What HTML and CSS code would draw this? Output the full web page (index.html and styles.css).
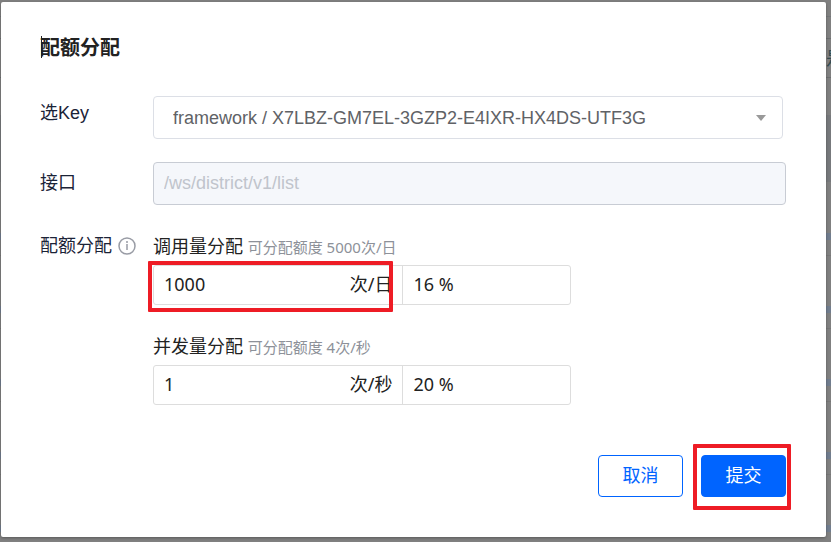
FILE: index.html
```
<!DOCTYPE html>
<html lang="zh-CN">

<head>
    <title>配额分配</title>
    <meta charset="utf-8" />
    <link rel="stylesheet" href="styles.css">
</head>

<body>
    <div class="backdrop">
        <span class="backdrop-text">是</span>
    </div>
    <form class="modal">
        <h1 class="title">配额分配</h1>
        <div class="row">
            <label class="label" for="key">选Key</label>
            <div class="field select-box">
                <select class="select" id="key">
                    <option>framework / X7LBZ-GM7EL-3GZP2-E4IXR-HX4DS-UTF3G</option>
                </select>
                <svg class="arrow" viewBox="0 0 10 6"><path d="M0 0h10L5 6z" /></svg>
            </div>
        </div>
        <div class="row row-api">
            <label class="label" for="api">接口</label>
            <div class="field">
                <input class="input" id="api" type="text" value="/ws/district/v1/list" disabled>
            </div>
        </div>
        <div class="row row-quota">
            <div class="label">配额分配
                <svg class="info" viewBox="0 0 18 18">
                    <circle cx="9" cy="9" r="8" />
                    <path d="M9 4v2M9 7v6" />
                </svg>
            </div>
            <div class="field">
                <div class="quota">
                    <label class="quota-title" for="daily">调用量分配 <small class="tip">可分配额度 5000次/日</small></label>
                    <div class="group">
                        <div class="amount">
                            <input class="number" id="daily" type="text" value="1000">
                            <span>次/日</span>
                        </div>
                        <output class="percent" for="daily">16 %</output>
                        <i class="mark mark-amount"></i>
                    </div>
                </div>
                <div class="quota">
                    <label class="quota-title" for="second">并发量分配 <small class="tip">可分配额度 4次/秒</small></label>
                    <div class="group">
                        <div class="amount">
                            <input class="number" id="second" type="text" value="1">
                            <span>次/秒</span>
                        </div>
                        <output class="percent" for="second">20 %</output>
                    </div>
                </div>
            </div>
        </div>
        <div class="footer">
            <button class="btn" type="button">取消</button>
            <div class="submit">
                <button class="btn btn-primary" type="submit">提交</button>
                <i class="mark mark-submit"></i>
            </div>
        </div>
    </form>
</body>

</html>
```

FILE: styles.css
```
* {
    box-sizing: border-box;
}

body {
    margin: 0;
    padding: 2px 5px 5px 1px;
    background: #808080;
    color: #222;
    font: 18px/24px "Noto Sans", "Noto Sans CJK SC", sans-serif;
}

/* 弹窗后面的页面 */
.backdrop {
    position: absolute;
    top: 0;
    right: 0;
    bottom: 0;
    left: 0;
    overflow: hidden;
    background:
        linear-gradient(#737678, #737678) 0 16px / 100% 1px no-repeat,
        linear-gradient(#6d6f70, #6d6f70) 0 38px / 100% 1px no-repeat,
        linear-gradient(#6d6f70, #6d6f70) 0 77px / 100% 1px no-repeat,
        linear-gradient(#77797c, #77797c) 0 115px / 100% 67px no-repeat,
        repeating-linear-gradient(#717d8e 0 7px, transparent 7px 22px, #777 22px 23px, transparent 23px 73px) 0 233px / 100% 309px no-repeat,
        #808080;
}

.backdrop-text {
    position: absolute;
    top: 46px;
    right: -13px;
    color: #344b50;
}

/* 弹窗 */
.modal {
    position: relative;
    padding: 33px 40px 40px 39px;
    border-radius: 2px;
    background: #fff;
    box-shadow: 0 1px 3px rgba(0, 0, 0, .3);
}

.title {
    position: relative;
    margin: 0 0 35px;
    font-size: 20px;
    line-height: 26px;
}

.title::before {
    content: "";
    position: absolute;
    top: 1px;
    left: 1px;
    width: 1px;
    height: 22px;
    background: #222;
}

.row {
    display: flex;
    margin-bottom: 23px;
}

.label {
    flex: none;
    width: 113px;
    padding-top: 5px;
    color: #1b2337;
    font-family: "Liberation Sans", "Noto Sans CJK SC", sans-serif;
}

.row-api .label {
    padding-top: 9px;
}

.field {
    flex: 1;
    min-width: 0;
}

.select-box {
    position: relative;
    margin-right: 3px;
}

.select,
.input {
    display: block;
    width: 100%;
    height: 43px;
    padding: 0 10px;
    border: 1px solid #dcdfe6;
    border-radius: 4px;
    background: #fff;
    font: 18px/24px "Liberation Sans", "Noto Sans CJK SC", sans-serif;
}

.select {
    appearance: none;
    padding: 0 19px;
    color: #606266;
}

.input:disabled {
    border-color: #c8ccd4;
    background: #f5f7fb;
    color: #c0c4cc;
}

.arrow {
    position: absolute;
    top: 19px;
    right: 17px;
    width: 10px;
    height: 6px;
    fill: #999;
}

.row-quota {
    margin-bottom: 50px;
}

.row-quota .label {
    display: flex;
    align-items: center;
    gap: 6px;
    height: 24px;
    margin-top: 6px;
    padding-top: 0;
}

.info {
    width: 18px;
    height: 18px;
    fill: none;
    stroke: #999ca5;
    stroke-width: 1.5;
}

.quota {
    padding-top: 6px;
}

.quota + .quota {
    margin-top: 23px;
}

.quota-title {
    display: block;
    height: 24px;
    margin-bottom: 7px;
}

.tip {
    color: #8d9199;
    font-size: 15px;
}

.group {
    position: relative;
    display: flex;
    width: 66%;
    height: 40px;
    border: 1px solid #ddd;
    border-radius: 3px;
    line-height: 36px;
}

.amount {
    display: flex;
    flex: none;
    width: 60%;
    padding: 0 10px;
    border-right: 1px solid #ddd;
}

.number {
    flex: 1;
    min-width: 0;
    height: 36px;
    padding: 0;
    border: 0;
    background: none;
    color: inherit;
    font: inherit;
}

.percent {
    padding-left: 10px;
}

.footer {
    display: flex;
    justify-content: flex-end;
    gap: 18px;
}

.submit {
    position: relative;
}

.btn {
    width: 85px;
    height: 42px;
    padding: 0 0 2px;
    border: 1px solid #0064ff;
    border-radius: 4px;
    background: #fff;
    color: #0064ff;
    font: inherit;
}

.btn-primary {
    background: #0064ff;
    color: #fff;
}

/* 红框标注 */
.mark {
    position: absolute;
    border: 4px solid #ee1c25;
    border-radius: 1px;
    pointer-events: none;
}

.mark-amount {
    top: -5px;
    left: -6px;
    width: 245px;
    height: 51px;
}

.mark-submit {
    top: -11px;
    left: -8px;
    width: 98px;
    height: 66px;
}
```
